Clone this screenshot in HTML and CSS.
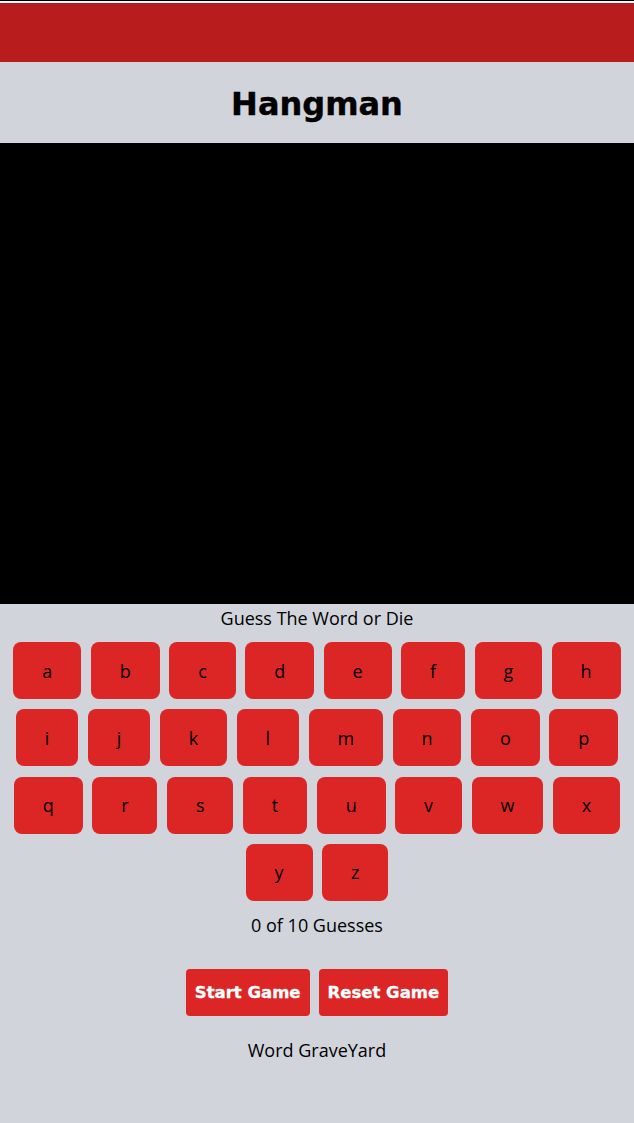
FILE: index.html
```html
<!DOCTYPE html>
<html>
<head>
<meta charset="utf-8">
<title>Hangman</title>
<link rel="stylesheet" href="styles.css">
</head>
<body>
<div class="topline"></div>
<header class="bar"></header>
<section class="title"><h1>Hangman</h1></section>
<div class="canvas"></div>
<main class="game">
  <p class="prompt">Guess The Word or Die</p>
  <div class="keys">
    <button class="key">a</button><button class="key">b</button><button class="key">c</button><button class="key">d</button><button class="key">e</button><button class="key">f</button><button class="key">g</button><button class="key">h</button>
    <button class="key">i</button><button class="key">j</button><button class="key">k</button><button class="key">l</button><button class="key">m</button><button class="key">n</button><button class="key">o</button><button class="key">p</button>
    <button class="key">q</button><button class="key">r</button><button class="key">s</button><button class="key">t</button><button class="key">u</button><button class="key">v</button><button class="key">w</button><button class="key">x</button>
    <button class="key">y</button><button class="key">z</button>
  </div>
  <p class="count">0 of 10 Guesses</p>
  <div class="actions">
    <button class="action">Start Game</button>
    <button class="action">Reset Game</button>
  </div>
  <p class="grave">Word GraveYard</p>
</main>
</body>
</html>
```
FILE: styles.css
```css
html, body {
  margin: 0;
  padding: 0;
  background: #d1d5db;
  font-family: "Open Sans", "DejaVu Sans", sans-serif;
  color: #000;
}
.topline {
  height: 1px;
  background: #000;
  border-bottom: 2px solid #fff;
}
.bar {
  height: 59px;
  background: #b91c1c;
}
.title {
  height: 81px;
  padding-top: 3px;
  box-sizing: border-box;
  display: flex;
  align-items: center;
  justify-content: center;
}
.title h1 {
  margin: 0;
  font-family: "DejaVu Sans", sans-serif;
  font-weight: bold;
  font-size: 32px;
  line-height: 1;
  -webkit-text-stroke: 0.4px #000;
}
.canvas {
  height: 461px;
  background: #000;
}
.game {
  display: flex;
  flex-direction: column;
  align-items: center;
}
.prompt, .count, .grave {
  margin: 0;
  font-size: 18px;
  line-height: 28px;
}
.keys {
  width: 624px;
  margin-top: 10px;
  display: flex;
  flex-wrap: wrap;
  justify-content: center;
  column-gap: 9.6px;
  row-gap: 10.3px;
}
.key {
  height: 57px;
  padding: 0 28.9px;
  border: none;
  border-radius: 8px;
  background: #dc2626;
  color: #000;
  font-family: "Open Sans", "DejaVu Sans", sans-serif;
  font-size: 18px;
}
.count {
  margin-top: 10px;
}
.actions {
  margin-top: 30px;
  display: flex;
  gap: 9px;
}
.action {
  height: 47px;
  padding: 0 9px;
  border: none;
  border-radius: 4px;
  background: #dc2626;
  color: #fff;
  font-family: "DejaVu Sans", sans-serif;
  font-weight: bold;
  font-size: 16.5px;
  -webkit-text-stroke: 0.3px #fff;
}
.grave {
  margin-top: 20px;
}
```
